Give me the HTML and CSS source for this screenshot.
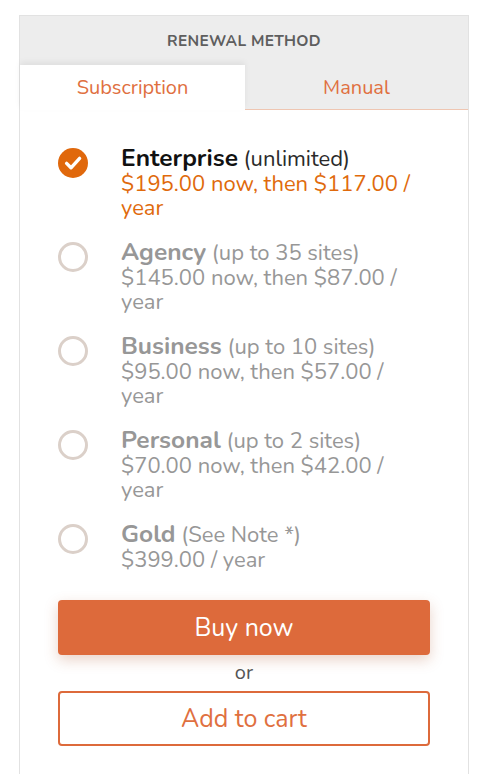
FILE: index.html
```html
<!DOCTYPE html>
<html>
<head>
<meta charset="utf-8">
<link rel="stylesheet" href="styles.css">
</head>
<body>
<div class="card">
  <div class="card-head">RENEWAL METHOD</div>
  <div class="tabs">
    <div class="tab active">Subscription</div>
    <div class="tab">Manual</div>
  </div>
  <div class="body">
    <div class="options">
      <div class="option selected">
        <span class="radio checked"><svg viewBox="0 0 30 30" width="30" height="30"><circle cx="15" cy="15" r="15" fill="#e0680c"/><path d="M8.6 15.4 L13 19.8 L21.6 10.4" fill="none" stroke="#fff" stroke-width="3.4" stroke-linecap="round" stroke-linejoin="round"/></svg></span>
        <div class="text"><div class="title"><span class="name">Enterprise</span> <span class="note">(unlimited)</span></div><div class="price">$195.00 now, then $117.00 / year</div></div>
      </div>
      <div class="option">
        <span class="radio"></span>
        <div class="text"><div class="title"><span class="name">Agency</span> <span class="note">(up to 35 sites)</span></div><div class="price">$145.00 now, then $87.00 / year</div></div>
      </div>
      <div class="option">
        <span class="radio"></span>
        <div class="text"><div class="title"><span class="name">Business</span> <span class="note">(up to 10 sites)</span></div><div class="price">$95.00 now, then $57.00 / year</div></div>
      </div>
      <div class="option">
        <span class="radio"></span>
        <div class="text"><div class="title"><span class="name">Personal</span> <span class="note">(up to 2 sites)</span></div><div class="price">$70.00 now, then $42.00 / year</div></div>
      </div>
      <div class="option">
        <span class="radio"></span>
        <div class="text"><div class="title"><span class="name">Gold</span> <span class="note">(See Note *)</span></div><div class="price">$399.00 / year</div></div>
      </div>
    </div>
    <div class="actions">
      <button class="btn buy">Buy now</button>
      <div class="or">or</div>
      <button class="btn cart">Add to cart</button>
    </div>
  </div>
</div>
</body>
</html>
```
FILE: styles.css
```css
html, body {
  margin: 0;
  padding: 0;
  background: #fff;
}
body {
  font-family: "Nunito", "Open Sans", "Liberation Sans", sans-serif;
  padding: 15px 22px 0 19px;
  height: 774px;
  box-sizing: border-box;
  overflow: hidden;
}
.card {
  border: 1px solid #e2e2e2;
  border-bottom: none;
  height: 100%;
  box-sizing: border-box;
}
.card-head {
  background: #ededed;
  height: 49px;
  display: flex;
  align-items: center;
  justify-content: center;
  font-size: 15.5px;
  font-weight: 700;
  color: #5e5e5e;
  letter-spacing: 0.3px;
}
.tabs {
  display: grid;
  grid-template-columns: 225px 1fr;
  background: #ededed;
  height: 45px;
}
.tab {
  display: flex;
  align-items: center;
  justify-content: center;
  font-size: 20px;
  color: #e0703f;
  border-bottom: 1.5px solid #efc6b2;
}
.tab.active {
  background: #fff;
  border-bottom: none;
  box-shadow: 0 -3px 6px rgba(0,0,0,0.06);
  padding-bottom: 1px;
}
.body {
  padding: 36px 38px 0 38px;
}
.options {
  display: flex;
  flex-direction: column;
  gap: 20px;
}
.option {
  display: flex;
  align-items: flex-start;
  gap: 33px;
  color: #979797;
}
.radio {
  width: 30px;
  height: 30px;
  flex: none;
  box-sizing: border-box;
  border: 3px solid #dbd0c9;
  border-radius: 50%;
  margin-top: 1.5px;
}
.radio.checked {
  border: none;
}
.radio svg {
  display: block;
}
.text {
  max-width: 309px;
}
.title {
  font-size: 22px;
  line-height: 26px;
}
.name {
  font-size: 24.5px;
  font-weight: 700;
  line-height: 0;
}
.note {
  line-height: 0;
}
.price {
  font-size: 22px;
  line-height: 24px;
}
.selected .name {
  color: #111;
}
.selected .note {
  color: #2a2a2a;
}
.selected .price {
  color: #e06a0c;
}
.actions {
  margin-top: 28px;
  display: flex;
  flex-direction: column;
  align-items: stretch;
}
.btn {
  height: 55px;
  font-family: inherit;
  font-size: 25px;
  border-radius: 4px;
  cursor: pointer;
}
.buy {
  background: #dd6a3b;
  color: #fff;
  border: none;
  box-shadow: 0 5px 14px rgba(170, 80, 40, 0.25);
}
.or {
  text-align: center;
  color: #555;
  font-size: 20px;
  line-height: 36px;
}
.cart {
  background: #fff;
  color: #e0703f;
  border: 2px solid #dd6a3b;
}
```
